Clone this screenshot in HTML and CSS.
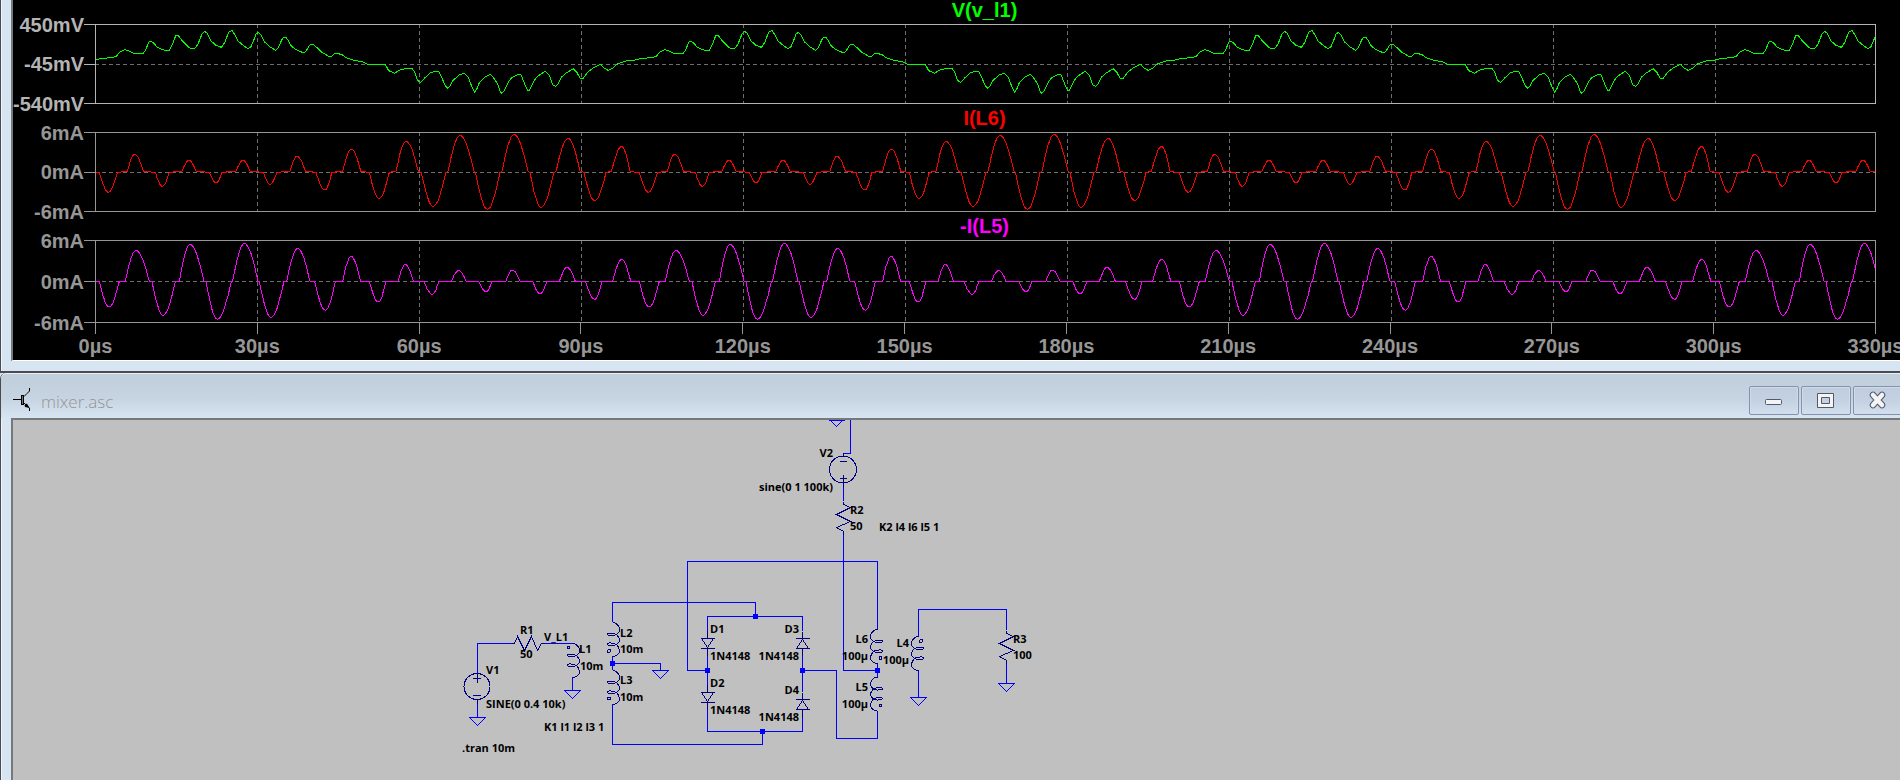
FILE: index.html
```html
<!doctype html>
<html lang="en">
<head>
  <meta charset="UTF-8" />
  <meta name="viewport" content="width=device-width, initial-scale=1" />
  <title>mixer.asc</title>
  <link rel="stylesheet" href="styles.css">
</head>
<body>
  <section class="window plot-window">
    <div class="plots">
      <div class="pane voltage">
        <h2 class="green">V(v_l1)</h2>
        <div class="pane-row">
          <ul class="y-axis"><li>450mV</li><li>-45mV</li><li>-540mV</li></ul>
          <svg class="graph" id="v_l1" viewBox="288 75 5337 234" preserveAspectRatio="none"></svg>
        </div>
      </div>
      <div class="pane">
        <h2 class="red">I(L6)</h2>
        <div class="pane-row">
          <ul class="y-axis"><li>6mA</li><li>0mA</li><li>-6mA</li></ul>
          <svg class="graph" id="i_l6" viewBox="288 399 5337 234" preserveAspectRatio="none"></svg>
        </div>
      </div>
      <div class="pane tall">
        <h2 class="magenta">-I(L5)</h2>
        <div class="pane-row">
          <ul class="y-axis"><li>6mA</li><li>0mA</li><li>-6mA</li></ul>
          <svg class="graph" id="i_l5" viewBox="288 723 5337 243" preserveAspectRatio="none"></svg>
        </div>
      </div>
      <ul class="x-axis">
        <li>0µs</li><li>30µs</li><li>60µs</li><li>90µs</li><li>120µs</li><li>150µs</li>
        <li>180µs</li><li>210µs</li><li>240µs</li><li>270µs</li><li>300µs</li><li>330µs</li>
      </ul>
    </div>
  </section>

  <section class="window schematic-window">
    <header class="titlebar">
      <svg class="app-icon" width="18" height="24" viewBox="0 0 18 24">
        <path d="M0 11.5H8M11 8.5L14 5.500L16.500 3V0M11 15L16.500 20V23" fill="none" stroke="#000" />
        <rect x="8.500" y="7.500" width="2" height="9" fill="#777" stroke="#000" />
        <path d="M11.500 17L14 15.500L16.500 20L12 19Z" fill="#000" />
      </svg>
      <h1>mixer.asc</h1>
      <div class="controls">
        <button aria-label="Minimize">
          <svg width="20" height="18" viewBox="0 0 20 18">
            <rect x="1.500" y="8.500" width="16" height="5" rx="1" fill="#f4f4f4" stroke="#53586c" />
          </svg>
        </button>
        <button aria-label="Maximize">
          <svg width="20" height="18" viewBox="0 0 20 18">
            <path d="M1.500 2.500H17.500V16.500H1.500ZM5.500 6.500V12.500H13.500V6.500Z" fill="#f4f4f4" fill-rule="evenodd" stroke="#53586c" stroke-linejoin="round" />
          </svg>
        </button>
        <button aria-label="Close">
          <svg width="20" height="18" viewBox="0 0 20 18">
            <path d="M5 4L14 14M14 4L5 14" stroke="#53586c" stroke-width="6.500" stroke-linecap="round" />
            <path d="M5 4L14 14M14 4L5 14" stroke="#f4f4f4" stroke-width="4.500" stroke-linecap="round" />
          </svg>
        </button>
      </div>
    </header>
    <div class="sheet">
      <svg class="schematic" width="1100" height="360" viewBox="13 420 1100 360">
        <defs>
          <path id="resistor" d="M0 0V3L7 6L-7 13L7 20L-7 26L0 30V33" />
          <path id="coil" d="M0 0C4 0 7 4 7 7C7 11 3 13 0 13C-3 13 -5 12.500 -5 12C-5 10 1 10 4 12C6 14 7 15 7 17C7 20 4 23 0 23C-4 23 -5 22 -5 21.500C-5 20 1 20 4 22C6 24 7 25 7 28C7 31 4 34 0 34" />
          <path id="diode" d="M0 -8V0M-7 0H7M-6 0L0 9L6 0M-7 10H7M0 10V17" />
          <path id="ground" d="M-8 0H8L0 8Z" />
          <rect id="node" x="-2.500" y="-2.500" width="5" height="5" />
        </defs>

        <g class="wires">
          <path d="M477.500 673V643.500H512M544 643.500H572.500M572.500 677V690.500M477.500 699V717.500" />
          <path d="M612.500 622V602.500H755.500V616.500M612.500 656V670M612.500 663.500H660.500V670.500" />
          <path d="M612.500 704V744.500H762.500V731.500" />
          <path d="M707.500 631V616.500H802.500V631M707.500 655V685M707.500 709V731.500H802.500V716M802.500 655V692" />
          <path d="M877.500 629V561.500H687.500V670.500H707.500" />
          <path d="M802.500 670.500H836.500V738.500H877.500V711M877.500 663V677" />
          <path d="M843.500 534V670.500H877.500M843.500 483V501M843.500 456V453.500H850.500V420" />
          <path d="M918.500 636V609.500H1006.500V630M1006.500 663V683.500M918.500 670V697.500" />
          <use href="#ground" x="477.500" y="717.500" />
          <use href="#ground" x="572.500" y="690.500" />
          <use href="#ground" x="660.500" y="670.500" />
          <use href="#ground" x="918.500" y="697.500" />
          <use href="#ground" x="1006.500" y="683.500" />
          <use href="#ground" x="836.500" y="418.500" />
          <path d="M829 420.500H845" />
        </g>

        <g class="nodes">
          <use href="#node" x="612.500" y="663.500" />
          <use href="#node" x="707.500" y="670.500" />
          <use href="#node" x="802.500" y="670.500" />
          <use href="#node" x="755.500" y="616.500" />
          <use href="#node" x="762.500" y="731.500" />
          <use href="#node" x="877.500" y="670.500" />
        </g>

        <g class="parts">
          <circle cx="477" cy="686.500" r="13" />
          <path d="M473 678.500H481M477.500 674V683M473 695.500H481M477.500 699V704" />
          <circle cx="843" cy="469.500" r="13.500" />
          <path d="M840 461.500H847M840 478.500H847M843.500 475V487M843.500 453V456" />
          <use href="#resistor" transform="translate(511.500 643.500) rotate(-90)" />
          <use href="#resistor" x="843.500" y="501.500" />
          <use href="#resistor" x="1006.500" y="630.500" />
          <use href="#coil" x="572.500" y="643.500" />
          <circle cx="568.500" cy="647.500" r="1" />
          <use href="#coil" x="612.500" y="622.500" />
          <circle cx="609" cy="651" r="1.500" />
          <use href="#coil" x="612.500" y="670.500" />
          <circle cx="609" cy="698.500" r="1.500" />
          <use href="#coil" transform="translate(877.500 629.500) scale(-1 1)" />
          <circle cx="880.500" cy="658" r="1.500" />
          <use href="#coil" transform="translate(877.500 677) scale(-1 1)" />
          <circle cx="880.500" cy="705.500" r="1" />
          <use href="#coil" transform="translate(918.500 636.500) scale(-1 1)" />
          <circle cx="921" cy="641" r="1.500" />
          <use href="#diode" x="707.500" y="638.500" />
          <use href="#diode" x="707.500" y="692.500" />
          <use href="#diode" transform="translate(802.500 648.500) scale(1 -1)" />
          <use href="#diode" transform="translate(802.500 709.500) scale(1 -1)" />
        </g>

        <g class="labels">
          <text x="520" y="634">R1</text>
          <text x="520" y="658">50</text>
          <text x="544" y="641">V_L1</text>
          <text x="579" y="653">L1</text>
          <text x="580" y="670">10m</text>
          <text x="486" y="674">V1</text>
          <text x="486" y="708">SINE(0 0.4 10k)</text>
          <text x="544" y="731">K1 l1 l2 l3 1</text>
          <text x="462" y="752">.tran 10m</text>
          <text x="620" y="637">L2</text>
          <text x="620" y="653">10m</text>
          <text x="620" y="684">L3</text>
          <text x="620" y="701">10m</text>
          <text x="710" y="633">D1</text>
          <text x="710" y="660">1N4148</text>
          <text x="710" y="687">D2</text>
          <text x="710" y="714">1N4148</text>
          <text x="879" y="531">K2 l4 l6 l5 1</text>
          <text x="850" y="514">R2</text>
          <text x="850" y="530">50</text>
          <text x="1013" y="643">R3</text>
          <text x="1013" y="659">100</text>
        </g>
        <g class="labels right">
          <text x="799" y="633">D3</text>
          <text x="799" y="660">1N4148</text>
          <text x="799" y="694">D4</text>
          <text x="799" y="721">1N4148</text>
          <text x="868" y="643">L6</text>
          <text x="868" y="660">100µ</text>
          <text x="868" y="691">L5</text>
          <text x="868" y="708">100µ</text>
          <text x="909" y="647">L4</text>
          <text x="909" y="664">100µ</text>
          <text x="833" y="457">V2</text>
          <text x="833" y="491">sine(0 1 100k)</text>
        </g>
      </svg>
    </div>
  </section>

  <script src="script.js"></script>
</body>
</html>
```
FILE: styles.css
```css
body {
  margin: 0;
  height: 100vh;
  display: flex;
  flex-direction: column;
  overflow: hidden;
  background: #d7e4f2;
  font-family: "Liberation Sans", Arial, sans-serif;
}
h1, h2, ul {
  margin: 0;
  padding: 0;
  list-style: none;
}
.window {
  border-left: 1px solid #4a4a4f;
  box-shadow: inset 1px 0 0 #eef4fa;
  padding-left: 10px;
}

/* waveform window */
.plot-window {
  padding-bottom: 10px;
  border-bottom: 2px solid #4a4a4f;
}
.plots {
  height: 360px;
  background: #000;
  border-left: 2px solid #77787c;
  border-bottom: 1px solid #fff;
  overflow: hidden;
  color: #969696;
  font-size: 20px;
  font-weight: bold;
  line-height: 20px;
}
.pane h2 {
  height: 28px;
  padding-left: 56px;
  font-size: 20px;
  line-height: 28px;
  text-align: center;
}
.voltage h2 {
  margin-top: -4px;
}
.green { color: #00ff00; }
.red { color: #ff0000; }
.magenta { color: #ff00ff; }
.pane-row {
  display: flex;
  height: 80px;
  padding-right: 24px;
}
.tall .pane-row {
  height: 83px;
}
.voltage .y-axis {
  color: #b4b4b4;
}
.y-axis {
  width: 82px;
  display: flex;
  flex-direction: column;
  justify-content: space-between;
}
.y-axis li {
  height: 1px;
  display: flex;
  align-items: center;
  justify-content: flex-end;
  line-height: 18px;
}
.y-axis li::after {
  content: "";
  width: 11px;
  height: 1px;
  background: currentColor;
}
.graph {
  flex: 1;
  min-width: 0;
  height: 100%;
  box-sizing: border-box;
  border: 1px solid #969696;
  overflow: hidden;
}
.voltage .graph {
  border-color: #b4b4b4;
}
.graph * {
  fill: none;
  vector-effect: non-scaling-stroke;
  shape-rendering: crispEdges;
}
.grid {
  stroke: #6e6e6e;
  stroke-dasharray: 4 3;
}
.trace { stroke-width: 1; }
#v_l1 .trace { stroke: #00ff00; }
#i_l6 .trace { stroke: #ff0000; }
#i_l5 .trace { stroke: #ff00ff; }
.x-axis {
  display: flex;
  justify-content: space-between;
  margin: 0 24px 0 82px;
}
.x-axis li {
  width: 1px;
  display: flex;
  flex-direction: column;
  align-items: center;
  white-space: nowrap;
}
.x-axis li::before {
  content: "";
  width: 1px;
  height: 11px;
  margin-bottom: 2px;
  flex: none;
  background: #969696;
}

/* schematic window */
.schematic-window {
  flex: 1;
  min-height: 0;
  display: flex;
  flex-direction: column;
  border-top-left-radius: 6px;
}
.titlebar {
  display: flex;
  align-items: center;
  height: 44px;
  margin-left: -10px;
  padding-left: 12px;
  border-top: 1px solid #e8eff7;
  border-top-left-radius: 6px;
  background: linear-gradient(#c0cddb, #c6d4e2 55%, #d7e4f2);
}
.app-icon {
  margin-top: 8px;
}
.titlebar h1 {
  flex: 1;
  margin: 12px 0 0 10px;
  color: #949494;
  font: 300 17px/24px "Open Sans", sans-serif;
}
.controls {
  display: flex;
  gap: 2px;
  margin: 8px -3px 0 0;
}
.controls button {
  width: 50px;
  height: 29px;
  padding: 0;
  display: flex;
  align-items: center;
  justify-content: center;
  border: 1px solid #8492b0;
  border-radius: 2px;
  background: linear-gradient(#c0cddd, #c3d1e2 50%, #d2dfed);
  box-shadow: inset 0 0 0 1px #d0dcea;
}
.sheet {
  flex: 1;
  min-height: 0;
  background: #c0c0c0;
  border: 2px solid #77787c;
  border-right: 0;
  border-bottom: 0;
  overflow: hidden;
}
.schematic {
  display: block;
}
.wires, .parts {
  fill: none;
  stroke: #0000ff;
  shape-rendering: crispEdges;
}
.parts {
  stroke: #000080;
}
.nodes {
  fill: #0000ff;
  shape-rendering: crispEdges;
}
.labels {
  fill: #000;
  font: bold 11px "Open Sans", sans-serif;
}
.right {
  text-anchor: end;
}
```
FILE: script.js
```js
const SVG = "http://www.w3.org/2000/svg";
const START = 286;
const END = 5625;
const PERIOD = 1620; // 100us
const STEP = 486;    // 30us

// V(v_l1) over one period: x, y
const voltage = [
  286,180, 300,176, 320,174, 348,170, 358,157, 375,149, 390,154, 400,160, 430,160, 438,148,
  446,126, 453,124, 462,130, 470,140, 484,147, 498,152, 508,152, 518,132, 527,107, 534,105,
  545,120, 560,136, 572,146, 584,146, 594,132, 606,102, 614,94, 622,100, 632,122, 648,136,
  664,142, 674,128, 686,96, 696,91, 706,106, 715,124, 732,138, 744,146, 752,142, 760,124,
  768,102, 775,97, 782,104, 794,126, 812,142, 827,151, 834,145, 844,122, 850,112, 858,112,
  866,124, 874,138, 890,150, 912,159, 920,150, 930,134, 940,134, 952,144, 964,156, 985,168,
  996,168, 1005,160, 1025,163, 1036,172, 1060,180, 1090,186, 1104,193, 1156,193, 1166,212,
  1184,220, 1196,211, 1220,205, 1236,206, 1244,216, 1252,240, 1262,248, 1274,234, 1292,218,
  1306,214, 1316,215, 1326,234, 1336,258, 1343,264, 1350,258, 1360,240, 1378,225, 1392,220,
  1404,230, 1414,256, 1424,277, 1430,268, 1438,248, 1454,232, 1472,223, 1484,238, 1494,255,
  1500,274, 1506,280, 1514,270, 1524,248, 1536,232, 1556,222, 1564,226, 1574,252, 1582,270,
  1588,270, 1598,250, 1608,234, 1622,222, 1636,214, 1648,226, 1658,254, 1666,259, 1674,252,
  1684,232, 1700,218, 1720,206, 1730,216, 1740,234, 1750,234, 1764,216, 1778,205, 1802,193,
  1812,204, 1824,211, 1836,206, 1850,193, 1880,182
];

// current pulses over one period: start, extremum, end, peak y
const l6 = [
  [298,325,352,577], [382,404,430,463], [466,487,508,559], [546,567,588,481],
  [628,648,666,548], [708,729,750,481], [790,810,830,553], [870,891,916,469],
  [948,974,996,570], [1028,1054,1082,447], [1108,1137,1168,595], [1188,1218,1255,424],
  [1264,1299,1338,619], [1344,1380,1422,406], [1426,1462,1500,628], [1506,1542,1584,403],
  [1590,1623,1662,622], [1668,1704,1740,415], [1752,1784,1818,602], [1834,1865,1890,440]
];
const l5 = [
  [298,327,358,921], [376,408,448,751], [456,489,526,946], [538,570,612,733],
  [618,652,694,958], [698,733,774,730], [778,813,852,952], [860,893,930,745],
  [944,976,1006,931], [1028,1053,1082,769], [1108,1135,1158,906], [1194,1216,1240,793],
  [1272,1297,1316,883], [1354,1376,1398,811], [1436,1458,1476,875], [1518,1537,1560,810],
  [1598,1620,1640,881], [1678,1701,1726,802], [1756,1784,1806,898], [1838,1865,1892,778]
];

function pulsePoints(pulses, zero, positiveRest) {
  const out = [];
  for (const [a, peak, b, y] of pulses) {
    const rest = y > zero ? zero : positiveRest;
    out.push(a, rest);
    for (let i = 1; i < 16; i++) {
      const u = i / 8 - 1;
      const x = u < 0 ? peak + u * (peak - a) : peak + u * (b - peak);
      out.push(x, rest + (y - rest) * Math.cos(u * Math.PI / 2));
    }
    out.push(b, rest);
  }
  return out;
}

function add(svg, tag, attrs) {
  const el = document.createElementNS(SVG, tag);
  for (const k in attrs) el.setAttribute(k, attrs[k]);
  svg.appendChild(el);
}

function draw(id, data, top, zero, bottom) {
  const svg = document.getElementById(id);
  add(svg, "path", { class: "grid", d: `M${START} ${zero}H${END}` });
  for (let x = START + STEP; x < END - 10; x += STEP) {
    add(svg, "path", { class: "grid", d: `M${x} ${top}V${bottom}` });
  }
  const pts = [];
  for (let shift = 0; shift < END; shift += PERIOD) {
    for (let i = 0; i < data.length; i += 2) {
      const x = data[i] + shift;
      // a little past the edge, the pane clips the rest
      if (x <= END + 40) pts.push(x.toFixed(0) + "," + data[i + 1].toFixed(0));
    }
  }
  add(svg, "polyline", { class: "trace", points: pts.join(" ") });
}

draw("v_l1", voltage, 72, 193, 312);
draw("i_l6", [START, 517, ...pulsePoints(l6, 517, 514)], 396, 517, 636);
draw("i_l5", [START, 844, ...pulsePoints(l5, 844, 844)], 720, 844, 969);
```
